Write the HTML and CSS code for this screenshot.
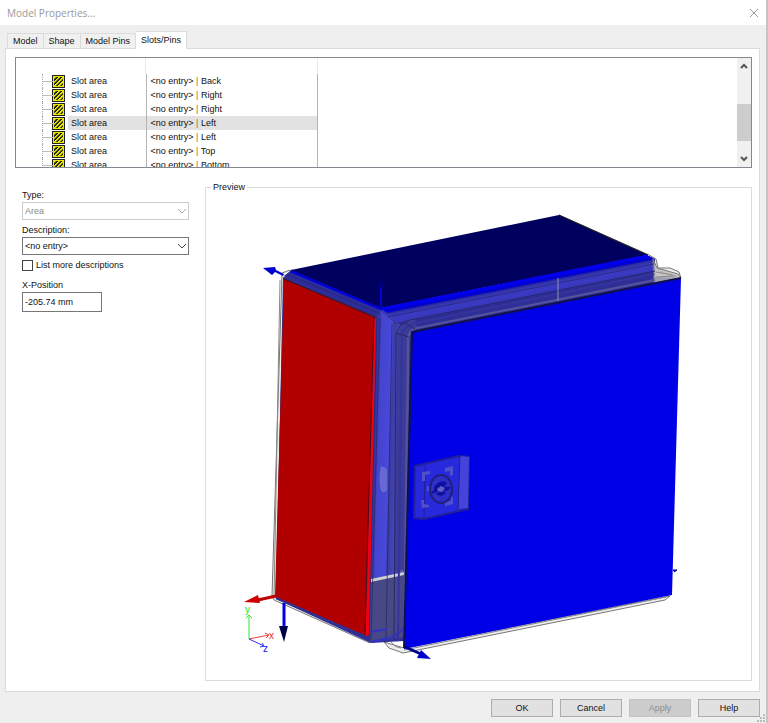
FILE: index.html
```html
<!DOCTYPE html>
<html lang="en">
<head>
  <meta charset="utf-8">
  <title>Model Properties...</title>
  <link rel="stylesheet" href="styles.css">
</head>
<body>
  <header class="titlebar">
    <h1>Model Properties...</h1>
    <button class="close" aria-label="Close"><svg width="10" height="10" viewBox="0 0 10 10"><path d="M1 1l8 8M9 1l-8 8" stroke="#999" fill="none"/></svg></button>
  </header>

  <nav class="tabs" role="tablist">
    <button role="tab">Model</button>
    <button role="tab">Shape</button>
    <button role="tab">Model Pins</button>
    <button role="tab" class="active" aria-selected="true">Slots/Pins</button>
  </nav>

  <main class="page">
    <div class="tree">
      <div class="tree-view">
        <div class="tree-head"></div>
        <table>
          <tr><td><span class="slot">Slot area</span></td><td>&lt;no entry&gt; <i>|</i> Back</td></tr>
          <tr><td><span class="slot">Slot area</span></td><td>&lt;no entry&gt; <i>|</i> Right</td></tr>
          <tr><td><span class="slot">Slot area</span></td><td>&lt;no entry&gt; <i>|</i> Right</td></tr>
          <tr class="selected"><td><span class="slot">Slot area</span></td><td>&lt;no entry&gt; <i>|</i> Left</td></tr>
          <tr><td><span class="slot">Slot area</span></td><td>&lt;no entry&gt; <i>|</i> Left</td></tr>
          <tr><td><span class="slot">Slot area</span></td><td>&lt;no entry&gt; <i>|</i> Top</td></tr>
          <tr><td><span class="slot">Slot area</span></td><td>&lt;no entry&gt; <i>|</i> Bottom</td></tr>
        </table>
      </div>
      <div class="scrollbar">
        <button aria-label="Scroll up"><svg width="8" height="6" viewBox="0 0 8 6"><path d="M1 5l3-3 3 3" fill="none" stroke="#555" stroke-width="2"/></svg></button>
        <div class="track"><div class="thumb"></div></div>
        <button aria-label="Scroll down"><svg width="8" height="6" viewBox="0 0 8 6"><path d="M1 1l3 3 3-3" fill="none" stroke="#555" stroke-width="2"/></svg></button>
      </div>
    </div>

    <div class="content">
      <form class="props">
        <label for="type">Type:</label>
        <div class="combo disabled">
          <select id="type" disabled><option>Area</option></select>
          <svg width="8" height="6" viewBox="0 0 8 6"><path d="M0 1l4 4 4-4" fill="none" stroke="#aaa"/></svg>
        </div>
        <label for="desc">Description:</label>
        <div class="combo">
          <select id="desc"><option>&lt;no entry&gt;</option></select>
          <svg width="8" height="6" viewBox="0 0 8 6"><path d="M0 1l4 4 4-4" fill="none" stroke="#444"/></svg>
        </div>
        <label class="check"><input type="checkbox">List more descriptions</label>
        <label for="xpos">X-Position</label>
        <input id="xpos" class="text" type="text" value="-205.74 mm">
      </form>

      <fieldset class="preview">
        <legend>Preview</legend>
        <svg class="model" viewBox="206 193 545 487" role="img" aria-label="Enclosure">
          <defs>
            <linearGradient id="frameTop" gradientUnits="userSpaceOnUse" x1="515" y1="282" x2="521" y2="312">
              <stop offset="0" stop-color="#0000f0"/>
              <stop offset=".14" stop-color="#0000cc"/>
              <stop offset=".2" stop-color="#30309c"/>
              <stop offset=".3" stop-color="#3a3ac8"/>
              <stop offset=".52" stop-color="#3838bc"/>
              <stop offset=".58" stop-color="#2c2c94"/>
              <stop offset=".85" stop-color="#303098"/>
              <stop offset="1" stop-color="#404078"/>
            </linearGradient>
            <linearGradient id="frameSide" gradientUnits="userSpaceOnUse" x1="374" y1="480" x2="408" y2="481">
              <stop offset="0" stop-color="#3434a4"/>
              <stop offset=".1" stop-color="#4444cc"/>
              <stop offset=".4" stop-color="#4848dc"/>
              <stop offset=".46" stop-color="#3c3ca4"/>
              <stop offset=".65" stop-color="#4646b8"/>
              <stop offset=".78" stop-color="#383898"/>
              <stop offset=".9" stop-color="#6060b0"/>
              <stop offset="1" stop-color="#303074"/>
            </linearGradient>
          </defs>

          <!-- transparent shell -->
          <g fill="#eee" stroke="#777">
            <path d="M282 273l8-3 4 4-10 6-8 317 95 44-1 2-96-43-2-4z"/>
            <path d="M559 215l90 40 7 4 2 9 12 0 9 4 2 6-44 10z"/>
            <path d="M384 642l5 6 14 5 262-53 5-4-266 52z"/>
          </g>
          <g fill="none" stroke="#888">
            <path d="M280 280l-6 318M651 257l4 11v10M658 270l17 8M404 650l262-53M391 642q4 6 10 6"/>
          </g>

          <!-- frame between the side and the door -->
          <path d="M283 278l8-8 91 38 267-52 6 3v18l26 1-269 54-8 309-33 2-95-44z" fill="#303098"/>
          <path d="M376 317l6-8 30 12v12l-8 304-33 5-4-6z" fill="url(#frameSide)"/>
          <path d="M371 581l33-7-1 63-33 5z" fill="#484886"/>
          <path d="M371 579l33-7v3l-33 7z" fill="#d0d0d0"/>
          <path d="M382 309l267-53 5 3v24l-242 50-17-12z" fill="url(#frameTop)"/>
          <path d="M653 259l4 9 21 6 3 4-27 5z" fill="#bbb" fill-opacity=".8" stroke="#777"/>
          <path d="M656 272l17 3M656 277l20-1" stroke="#888"/>
          <path d="M284 276l7-5 91 37-6 8z" fill="#2c2c9c"/>
          <path d="M291 271l91 38" stroke="#0000d8" stroke-width="3"/>

          <!-- rounded door rim -->
          <g fill="none">
            <path d="M400 570l3-232q1-12 13-15" stroke="#3c3c98" stroke-width="11"/>
            <path d="M398 640l4-304q1-10 14-13l238-49" stroke="#34349c" stroke-width="2"/>
            <path d="M404 640l4-302q1-8 9-10l238-48" stroke="#54549c" stroke-width="2"/>
            <path d="M394 640l2-304q1-12 14-16l245-49" stroke="#28286c"/>
            <path d="M408 640l2-302q1-6 8-8l238-47" stroke="#28286c"/>
            <path d="M396 333l13 4M404 322l11 7" stroke="#28286c"/>
          </g>
          <g fill="none" stroke="#282860" stroke-opacity=".75">
            <path d="M283 278l94 39M287 274l93 40M382 311l15 13M392 323l-6 317M388 317l266-53"/>
            <path d="M380 318l-9 322M377 318l-8 320"/>
          </g>
          <path d="M558 278v23" stroke="#9090b0"/>
          <path d="M381 466q6 2 6 4v20q-2 4-6 1-3-12 0-25z" fill="#6868d4"/>
          <path d="M371 632l16-3M371 642l22-5 10-8" fill="none" stroke="#3030c4" stroke-width="2"/>

          <!-- slot areas -->
          <path d="M291 270l268-55 89 40-266 53z" fill="#00005e"/>
          <path d="M559 215l89 40" stroke="#222" fill="none"/>
          <path d="M382 309l266-53" stroke="#0000ef" stroke-width="3"/>
          <path d="M284 279l91 38-8 319-92-39z" fill="#b00000"/>
          <path d="M374 319h2l-7 316-4 1z" fill="#f00010"/>
          <path d="M284 279l90 38-9 318" stroke="#441020" fill="none"/>
          <path d="M412 332l269-54-9 317-268 54z" fill="#0000e6"/>
          <path d="M681 278l-269 54-8 316" stroke="#101050" stroke-width="2" fill="none"/>
          <path d="M276 598l93 41" stroke="#303090" stroke-width="2"/>

          <!-- lock -->
          <path d="M415 466l44-10 10 1-1 52-44 10-10-1z" fill="#2828dd" stroke="#202098" stroke-width="2"/>
          <path d="M460 456l9 1-1 51-10 1z" fill="#4444dd"/>
          <path d="M425 466l-1 52M460 456l-2 53" stroke="#202090" fill="none"/>
          <path d="M422 472l8-1v3l-5 1v6h-3zM445 468l8-2v9l-3 1v-5l-5 1zM421 500h3v4l5 1v2l-7 1zM445 502l6-1v-4h2v7l-8 2z" fill="#5050c8"/>
          <path d="M427 486l6 1v5l-6-1z" fill="#5050c8"/>
          <ellipse cx="441" cy="489" rx="11" ry="14" fill="#2c2cd0" stroke="#202078" stroke-width="2"/>
          <ellipse cx="441" cy="489" rx="8" ry="10" fill="none" stroke="#3838a0"/>
          <path d="M434 487c3-5 9-7 13-4l-3 3c3 2 5 1 7 0-2 6-6 5-9 4-4 0-6 4-11 3l3-3z" fill="#10109c"/>
          <path d="M436 494c4 3 8 2 10-2l-5-1z" fill="#10109c"/>
          <path d="M437 489l4-3 4 2-3 4-4-1z" fill="#6060c8"/>

          <!-- direction arrows -->
          <g fill="#0000cc" stroke="#0000cc">
            <path d="M263 268l12-1 1 3 8 4-1 2-8-4-3 3z" stroke="none"/>
            <path d="M381 307v-20" stroke="#0000d8" stroke-width="2"/>
            <path d="M381 276l3 12h-6z" fill="#000080" stroke="none"/>
            <path d="M284 603v25" stroke="#0000e0" stroke-width="3"/>
            <path d="M279 626h9l-4 16z" fill="#000048" stroke="none"/>
            <path d="M405 647l16 7" stroke="#000090" stroke-width="3"/>
            <path d="M421 650l10 9-14-1z" stroke="none"/>
            <path d="M673 570l4 0-3 2" stroke="#000090"/>
          </g>
          <path d="M276 596l-18 4" stroke="#c00000" stroke-width="3"/>
          <path d="M244 602l14-7 2 8z" fill="#d00000"/>

          <!-- axes -->
          <g fill="none">
            <path d="M249 639v-24M246 618l3-3 3 3" stroke="#30e830"/>
            <path d="M249 639l20-4M265 633l4 2-3 3" stroke="#f04040"/>
            <path d="M249 639l15 7M262 643l2 3-4 1" stroke="#3030f0"/>
          </g>
          <g class="axis">
            <text x="245" y="613" fill="#20e820">y</text>
            <text x="269" y="639" fill="#f03030">x</text>
            <text x="263" y="652" fill="#2020f0">z</text>
          </g>
        </svg>
      </fieldset>
    </div>
  </main>

  <footer class="buttons">
    <button>OK</button>
    <button>Cancel</button>
    <button disabled>Apply</button>
    <button>Help</button>
    <svg class="grip" width="8" height="8" viewBox="0 0 8 8"><path d="M6 0h2v2h-2zM3 3h2v2h-2zM6 3h2v2h-2zM0 6h2v2h-2zM3 6h2v2h-2zM6 6h2v2h-2z" fill="#bbb"/></svg>
  </footer>
</body>
</html>
```
FILE: styles.css
```css
* { box-sizing: border-box; }

body
{
  display: flex;
  flex-direction: column;
  min-height: 100vh;
  margin: 0;
  background: #efefef;
  border-right: 2px solid #c4c4c4;
  font: 9px/14px "Liberation Sans", sans-serif;
  color: #111;
}

button, input, select { font: inherit; color: inherit; margin: 0; }

.titlebar
{
  display: flex;
  justify-content: space-between;
  align-items: center;
  height: 25px;
  padding: 0 7px;
  background: #fff;
}
.titlebar h1
{
  margin: 0;
  font: 10px/14px "Open Sans", sans-serif;
  color: #999;
}
.close { display: flex; padding: 0; border: 0; background: none; }

.tabs
{
  display: flex;
  align-items: flex-end;
  height: 24px;
  padding-left: 7px;
  margin-bottom: -1px;
}
.tabs button
{
  height: 16px;
  padding: 0 5px;
  border: 1px solid #dcdcdc;
  border-left: 0;
  background: #f0f0f0;
  line-height: 14px;
}
.tabs button:first-child { border-left: 1px solid #dcdcdc; }
.tabs .active
{
  z-index: 1;
  height: 18px;
  padding-bottom: 2px;
  border-bottom: 0;
  background: #fff;
}

.page
{
  display: flex;
  flex-direction: column;
  flex: 1;
  gap: 13px;
  margin: 0 6px 0 5px;
  padding: 8px 7px 10px 9px;
  border: 1px solid #dcdcdc;
  background: #fff;
}

.tree
{
  display: flex;
  height: 111px;
  border: 1px solid #828790;
}
.tree-view { flex: 1; overflow: hidden; }
.tree-head
{
  width: 302px;
  height: 16px;
  background: linear-gradient(#e8e8e8, #e8e8e8) 129px 0 / 1px 100% no-repeat;
  border-right: 1px solid #e8e8e8;
}
.tree table { border-collapse: collapse; width: 302px; table-layout: fixed; }
.tree tr { height: 14px; }
.tree td { padding: 0; border-right: 1px solid #b4b4b4; line-height: 14px; white-space: nowrap; }
.tree td:first-child { width: 130px; padding-left: 26px; }
.tree td:last-child { padding-left: 4px; }
.tree i { font-style: normal; color: #b06820; }
/* hatched slot symbol, drawn over the gap before the name */
.slot
{
  display: flex;
  align-items: center;
  height: 14px;
  background:
    linear-gradient(#222, #222) 10px 1px / 13px 1px no-repeat,
    linear-gradient(#222, #222) 10px 13px / 13px 1px no-repeat,
    linear-gradient(#222, #222) 10px 1px / 1px 13px no-repeat,
    linear-gradient(#222, #222) 22px 1px / 1px 13px no-repeat,
    repeating-linear-gradient(135deg, #e8e800 0 1px, #222 2px 3px) 12px 3px / 9px 9px no-repeat,
    linear-gradient(#e8e800, #e8e800) 11px 2px / 11px 11px no-repeat;
}
.slot::before
{
  content: "";
  flex: none;
  width: 10px;
  height: 14px;
  margin-right: 18px;
  background: linear-gradient(#bbb, #bbb) 0 7px / 10px 1px no-repeat;
  border-left: 1px dotted #aaa;
}
.selected td:first-child { background: linear-gradient(#e2e2e2, #e2e2e2) 52px 0 no-repeat; }
.selected td:last-child { background: #e2e2e2; }

.scrollbar
{
  display: flex;
  flex-direction: column;
  width: 14px;
  background: #f0f0f0;
}
.scrollbar button
{
  display: flex;
  align-items: center;
  justify-content: center;
  height: 16px;
  padding: 0;
  border: 0;
  background: none;
}
.track { flex: 1; padding-top: 30px; }
.thumb { height: 37px; background: #cdcdcd; }

.content { display: flex; flex: 1; gap: 16px; }

.props
{
  display: flex;
  flex-direction: column;
  width: 174px;
  padding: 7px 0 0 7px;
}
.combo { position: relative; margin-bottom: 3px; }
.combo select
{
  display: block;
  appearance: none;
  width: 100%;
  height: 18px;
  padding: 0 2px;
  border: 1px solid #777;
  border-radius: 0;
  background: #fff;
  opacity: 1;
}
.combo svg { position: absolute; right: 3px; top: 6px; pointer-events: none; }
.combo.disabled select { border-color: #ccc; color: #888; }
.check { display: flex; align-items: center; gap: 3px; margin-bottom: 6px; }
.check input
{
  appearance: none;
  width: 11px;
  height: 11px;
  border: 1px solid #444;
  background: #fff;
}
.text
{
  width: 80px;
  height: 20px;
  padding: 0 2px;
  border: 1px solid #777;
}

.preview
{
  display: flex;
  flex: 1;
  min-width: 0;
  margin: 0;
  padding: 0;
  border: 1px solid #dcdcdc;
}
.preview legend { margin-left: 5px; padding: 0 2px; line-height: 12px; }
.model { flex: 1; width: 100%; min-width: 0; min-height: 0; }
.axis { font: 10px "Liberation Sans", sans-serif; }

.buttons
{
  position: relative;
  display: flex;
  justify-content: flex-end;
  gap: 7px;
  padding: 7px 6px 6px 0;
}
.buttons button
{
  width: 62px;
  height: 18px;
  padding: 0;
  border: 1px solid #adadad;
  background: #e1e1e1;
}
.buttons button:disabled { border-color: #c4c4c4; background: #ccc; color: #8c8c8c; }
.grip { position: absolute; right: 1px; bottom: 1px; }
```
